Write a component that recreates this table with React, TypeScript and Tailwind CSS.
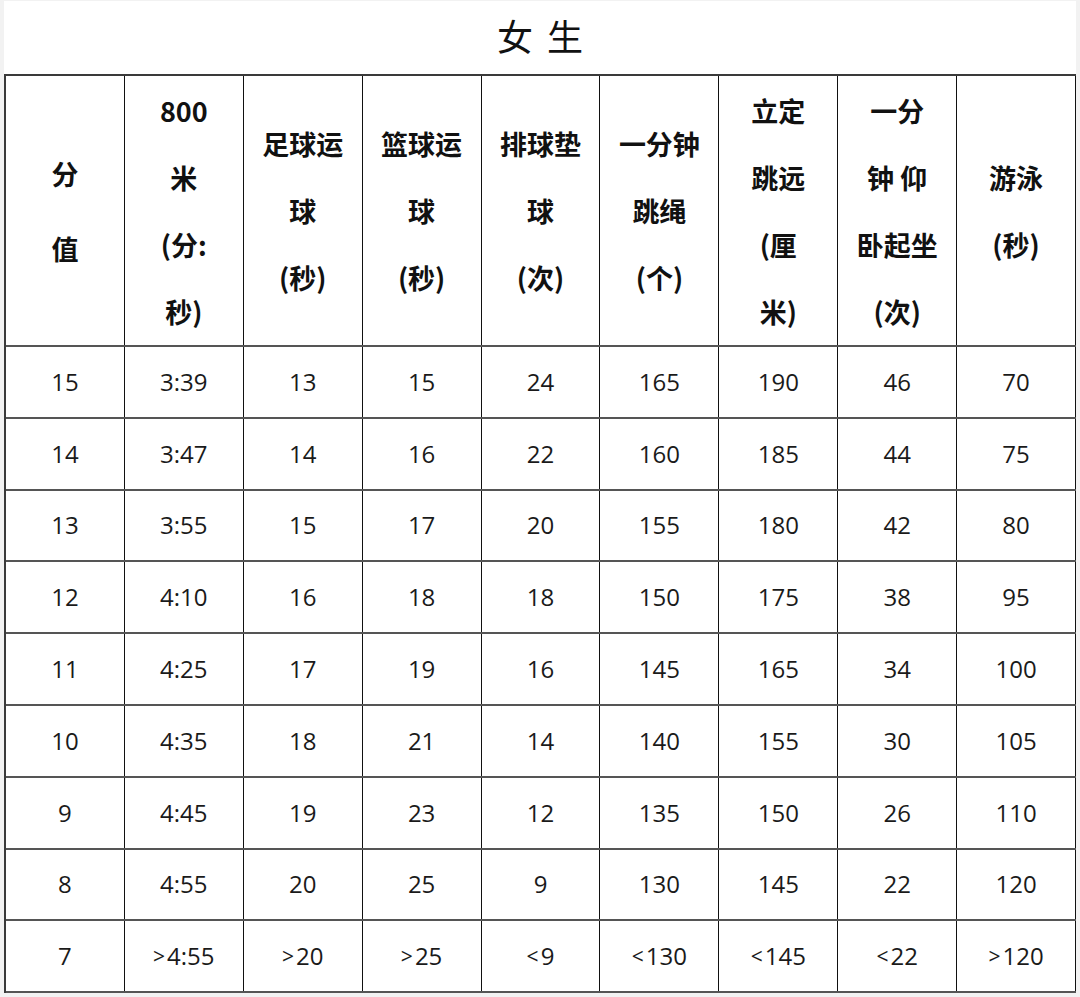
import React from "react";

const headers: { lines: string[]; leading?: string }[] = [
  { lines: ["分", "值"], leading: "leading-[75px]" },
  { lines: ["800", "米", "(分:", "秒)"] },
  { lines: ["足球运", "球", "(秒)"] },
  { lines: ["篮球运", "球", "(秒)"] },
  { lines: ["排球垫", "球", "(次)"] },
  { lines: ["一分钟", "跳绳", "(个)"] },
  { lines: ["立定", "跳远", "(厘", "米)"] },
  { lines: ["一分", "钟 仰", "卧起坐", "(次)"] },
  { lines: ["游泳", "(秒)"] },
];

const rows: string[][] = [
  ["15", "3:39", "13", "15", "24", "165", "190", "46", "70"],
  ["14", "3:47", "14", "16", "22", "160", "185", "44", "75"],
  ["13", "3:55", "15", "17", "20", "155", "180", "42", "80"],
  ["12", "4:10", "16", "18", "18", "150", "175", "38", "95"],
  ["11", "4:25", "17", "19", "16", "145", "165", "34", "100"],
  ["10", "4:35", "18", "21", "14", "140", "155", "30", "105"],
  ["9", "4:45", "19", "23", "12", "135", "150", "26", "110"],
  ["8", "4:55", "20", "25", "9", "130", "145", "22", "120"],
  ["7", ">4:55", ">20", ">25", "<9", "<130", "<145", "<22", ">120"],
];

function Cell({ v }: { v: string }) {
  const sym = v[0] === ">" || v[0] === "<" ? v[0] : null;
  if (!sym) return <>{v}</>;
  return (
    <>
      <span className="text-[21px] mr-[2px]">{sym}</span>
      {v.slice(1)}
    </>
  );
}

export default function App() {
  return (
    <div className="w-[1080px] h-[997px] bg-[#f2f2f2] pt-[1px]">
      <div className="ml-[4px] w-[1072px] bg-white">
        <div
          className="h-[73px] flex items-center justify-center pb-[5px] text-[36px] text-[#111] tracking-[3px] pl-[3px]"
          style={{ fontFamily: '"Noto Sans CJK SC", sans-serif' }}
        >
          女 生
        </div>
        <div className="border-t-2 border-l-2 border-[#3a3a3a]">
          <div className="grid grid-cols-9 h-[271px] border-b-2 border-[#555]">
            {headers.map((h, i) => (
              <div
                key={i}
                className="border-r border-[#111] flex flex-col items-center justify-center text-[27px] font-bold text-[#111]"
                style={{ fontFamily: '"Noto Sans CJK SC", sans-serif' }}
              >
                {h.lines.map((l, j) => (
                  <div key={j} className={`${h.leading ?? "leading-[67px]"} whitespace-pre`}>
                    {l}
                  </div>
                ))}
              </div>
            ))}
          </div>
          {rows.map((r, i) => (
            <div key={i} className="grid grid-cols-9 h-[71.8px] border-b-2 border-[#555]">
              {r.map((c, j) => (
                <div
                  key={j}
                  className="border-r border-[#111] flex items-center justify-center text-[24px] text-[#1a1a1a]"
                  style={{ fontFamily: '"Open Sans", "Noto Sans CJK SC", sans-serif' }}
                >
                  <Cell v={c} />
                </div>
              ))}
            </div>
          ))}
        </div>
      </div>
    </div>
  );
}
